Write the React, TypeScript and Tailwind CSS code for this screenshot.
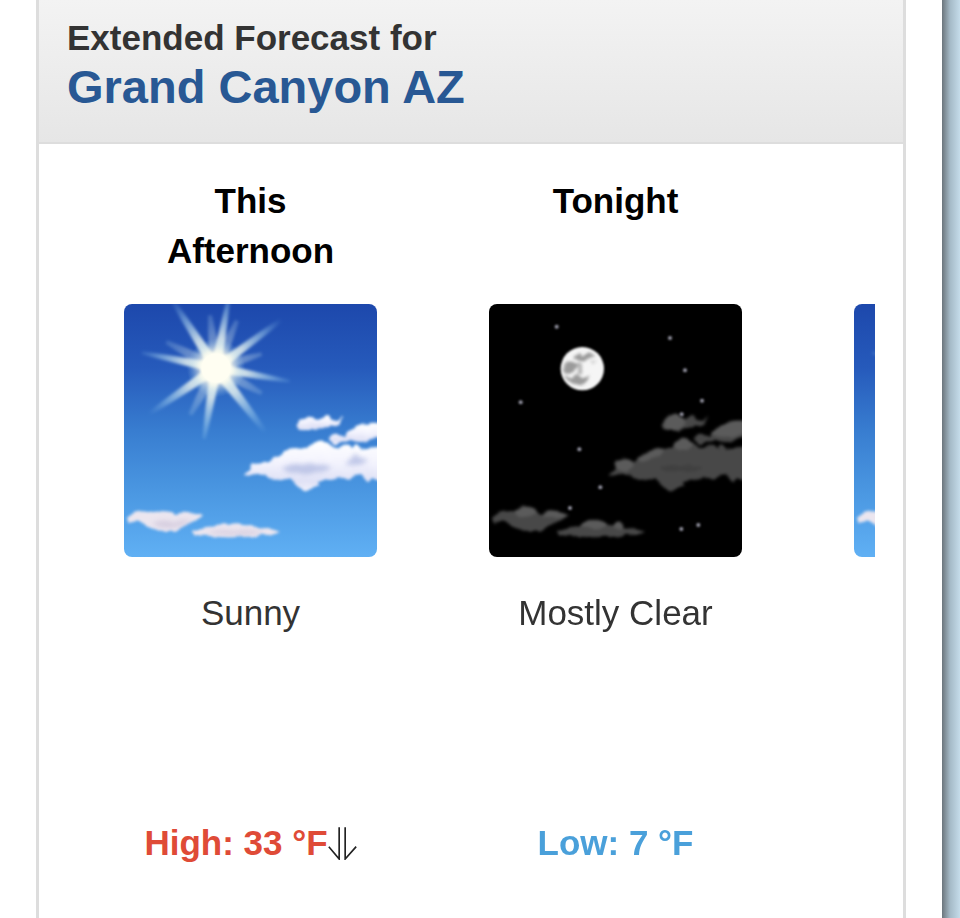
import type { ReactNode } from 'react'

type Period = {
  id: string
  name: string
  image: 'sunny' | 'clear-night'
  description?: string
  high?: string
  low?: string
}

const periods: Period[] = [
  { id: 'afternoon', name: 'This Afternoon', image: 'sunny', description: 'Sunny', high: 'High: 33 °F' },
  { id: 'tonight', name: 'Tonight', image: 'clear-night', description: 'Mostly Clear', low: 'Low: 7 °F' },
  { id: 'next', name: '', image: 'sunny' },
]

// center of the sun, then [tip x, tip y, half width at the core]
const SUN = { x: 303, y: 218 }
const rays = [
  [166, 6, 17],
  [342, 4, 16],
  [528, 52, 15],
  [524, 258, 15],
  [462, 424, 18],
  [267, 430, 17],
  [84, 368, 16],
  [80, 172, 15],
  [285, 60, 20],
  [366, 76, 20],
  [154, 140, 20],
  [440, 176, 18],
  [440, 294, 20],
  [226, 358, 20],
]

const stars = [
  [230, 94],
  [570, 128],
  [615, 225],
  [666, 316],
  [122, 321],
  [298, 462],
  [361, 576],
  [270, 638],
  [604, 701],
  [655, 689],
  [605, 357],
]

function rayPoints([tx, ty, w]: number[]) {
  const dx = tx - SUN.x
  const dy = ty - SUN.y
  const len = Math.hypot(dx, dy)
  const nx = (-dy / len) * w
  const ny = (dx / len) * w
  const mx = SUN.x + dx * 0.7
  const my = SUN.y + dy * 0.7
  return [
    [SUN.x + nx, SUN.y + ny],
    [mx + nx * 0.55, my + ny * 0.55],
    [tx + nx * 0.3, ty + ny * 0.3],
    [tx - nx * 0.3, ty - ny * 0.3],
    [mx - nx * 0.55, my - ny * 0.55],
    [SUN.x - nx, SUN.y - ny],
  ]
    .map((p) => p.join(','))
    .join(' ')
}

const cloudPaths = {
  wisp: 'M544 386 Q550 370 566 371 Q580 364 598 370 Q612 378 624 366 Q628 356 642 360 L648 372 Q664 382 684 364 Q676 392 660 393 Q642 386 626 398 Q608 406 590 400 Q568 410 550 398Z',
  upper:
    'M642 430 Q650 412 668 416 Q682 414 690 428 Q692 408 716 400 Q732 384 756 388 Q772 382 800 388 L800 428 Q770 428 752 438 Q728 444 708 434 Q692 446 676 440 Q662 452 650 442Z',
  main: 'M388 532 Q406 526 406 514 Q412 500 432 502 Q442 492 458 500 Q466 502 474 488 Q490 484 502 476 Q512 462 530 462 Q552 454 576 458 Q586 440 608 440 Q630 434 642 448 Q662 466 684 452 Q700 448 712 458 L722 446 L736 460 Q760 456 800 454 L800 552 Q786 560 774 548 L758 558 L742 540 Q720 538 704 550 Q676 544 650 554 Q624 550 606 558 L618 570 Q596 574 588 582 Q574 594 562 582 Q550 578 540 566 L526 552 Q500 560 482 550 Q462 552 452 540 Q438 532 424 536 Q406 548 388 536Z',
  left: 'M40 674 Q48 662 56 652 Q76 644 100 650 Q124 642 144 648 Q168 646 184 656 Q204 650 226 654 Q250 648 264 662 Q248 676 230 680 Q214 694 196 698 Q186 712 172 704 Q142 710 122 702 Q98 700 88 686 Q64 672 44 684Z',
  right:
    'M230 708 Q260 694 286 694 Q314 684 342 688 Q366 680 386 688 Q412 692 438 700 Q470 694 494 710 Q474 722 440 718 Q408 726 370 724 Q324 728 290 722 Q252 724 234 714Z',
}

function Tile({ label, children }: { label: string; children: ReactNode }) {
  return (
    <svg
      viewBox="27 26 759 759"
      role="img"
      aria-label={label}
      className="h-[253px] w-[253px] shrink-0 rounded-lg"
    >
      {children}
    </svg>
  )
}

function PuffFilter({ id, blur }: { id: string; blur: number }) {
  return (
    <filter id={id} x="-10%" y="-20%" width="120%" height="140%" colorInterpolationFilters="sRGB">
      <feTurbulence type="fractalNoise" baseFrequency="0.035" numOctaves="1" seed="4" />
      <feDisplacementMap in="SourceGraphic" scale="18" xChannelSelector="R" yChannelSelector="G" />
      <feGaussianBlur stdDeviation={blur} />
    </filter>
  )
}

function SunnyTile({ id }: { id: string }) {
  return (
    <Tile label="Sunny">
      <defs>
        <linearGradient id={`${id}-sky`} x1="0" y1="0" x2="0" y2="1">
          <stop offset="0" stopColor="#1d48ac" />
          <stop offset="0.25" stopColor="#265abb" />
          <stop offset="0.5" stopColor="#387dd0" />
          <stop offset="0.75" stopColor="#4b98e2" />
          <stop offset="1" stopColor="#60b0f4" />
        </linearGradient>
        <radialGradient id={`${id}-ray`} gradientUnits="userSpaceOnUse" cx={SUN.x} cy={SUN.y} r="245">
          <stop offset="0.15" stopColor="#fffff2" />
          <stop offset="0.4" stopColor="#dcebed" stopOpacity="0.85" />
          <stop offset="0.7" stopColor="#a6d2ee" stopOpacity="0.5" />
          <stop offset="1" stopColor="#7fbdeb" stopOpacity="0" />
        </radialGradient>
        <radialGradient id={`${id}-glow`}>
          <stop offset="0.48" stopColor="#fffef2" />
          <stop offset="0.6" stopColor="#f3f7ec" stopOpacity="0.6" />
          <stop offset="1" stopColor="#8fc4ea" stopOpacity="0" />
        </radialGradient>
        <linearGradient id={`${id}-cloud`} x1="0" y1="0" x2="0" y2="1">
          <stop offset="0" stopColor="#ffffff" />
          <stop offset="0.45" stopColor="#f2f2fd" />
          <stop offset="0.8" stopColor="#dfe1f5" />
          <stop offset="1" stopColor="#f2f1fb" />
        </linearGradient>
        <filter id={`${id}-soft`}>
          <feGaussianBlur stdDeviation="4" />
        </filter>
        <filter id={`${id}-shade`} x="-20%" y="-50%" width="140%" height="200%">
          <feGaussianBlur stdDeviation="8" />
        </filter>
        <PuffFilter id={`${id}-puff`} blur={4} />
      </defs>
      <rect x="27" y="26" width="759" height="759" fill={`url(#${id}-sky)`} />
      <g fill={`url(#${id}-ray)`} filter={`url(#${id}-soft)`}>
        {rays.slice(0, 8).map((ray, i) => (
          <polygon key={i} points={rayPoints(ray)} />
        ))}
        <g opacity="0.4">
          {rays.slice(8).map((ray, i) => (
            <polygon key={i} points={rayPoints(ray)} />
          ))}
        </g>
      </g>
      <circle cx={SUN.x} cy={SUN.y} r="88" fill={`url(#${id}-glow)`} />
      <g filter={`url(#${id}-puff)`}>
        <g fill={`url(#${id}-cloud)`}>
          <path d={cloudPaths.wisp} />
          <path d={cloudPaths.upper} />
          <path d={cloudPaths.main} />
        </g>
        <g fill="#ece6ef">
          <path d={cloudPaths.left} />
          <path d={cloudPaths.right} />
        </g>
      </g>
      <g fill="#b4bde3" opacity="0.8" filter={`url(#${id}-shade)`}>
        <path d="M500 520 Q530 500 564 508 Q590 498 604 510 Q628 504 650 516 Q634 532 602 530 Q576 544 548 532 Q520 536 500 520Z" />
        <path d="M690 506 Q712 490 720 472 Q728 490 760 492 L744 506 Q710 514 690 506Z" />
      </g>
      <g fill="#d0c8dc" opacity="0.8" filter={`url(#${id}-shade)`}>
        <path d="M110 684 Q146 668 176 682 Q206 670 228 674 Q200 696 168 698 Q130 700 110 684Z" />
        <path d="M272 712 Q320 700 356 708 Q410 700 446 712 Q380 724 272 712Z" />
      </g>
    </Tile>
  )
}

function ClearNightTile({ id }: { id: string }) {
  return (
    <Tile label="Mostly Clear">
      <defs>
        <filter id={`${id}-blur`} x="-50%" y="-50%" width="200%" height="200%">
          <feGaussianBlur stdDeviation="3" />
        </filter>
        <PuffFilter id={`${id}-puff`} blur={5} />
      </defs>
      <rect x="27" y="26" width="759" height="759" fill="#000000" />
      <g filter={`url(#${id}-blur)`}>
        <circle cx="307" cy="220" r="65" fill="#f5f5f5" />
      </g>
      <g filter={`url(#${id}-puff)`}>
        <g fill="#8a8a8a" opacity="0.85">
          <path d="M282 184 L296 176 L308 184 L326 174 L346 180 L328 190 L314 198 L292 196Z" />
          <path d="M254 206 Q264 190 278 198 L292 212 L280 230 Q264 242 250 228Z" />
          <path d="M254 240 L278 250 L290 236 L306 246 L328 238 L322 256 L306 270 L286 266 L268 262Z" />
          <path d="M290 200 L302 204 L304 234 L292 238Z" opacity="0.7" />
          <path d="M334 194 L348 198 L340 208Z" opacity="0.4" />
        </g>
        <g fill="#484848">
          <path d={cloudPaths.wisp} />
          <path d={cloudPaths.upper} />
          <path d={cloudPaths.main} />
          <path d={cloudPaths.left} />
          <path d={cloudPaths.right} />
        </g>
        <g fill="#5b5b5b">
          <ellipse cx="584" cy="382" rx="32" ry="24" />
          <path d="M696 422 Q702 394 732 390 Q752 374 800 380 L800 412 Q760 430 696 422Z" />
          <ellipse cx="608" cy="448" rx="28" ry="18" />
          <path d="M474 500 Q480 472 512 468 Q532 456 554 464 L540 482 Q510 486 496 500Z" />
          <ellipse cx="433" cy="508" rx="27" ry="20" />
          <ellipse cx="136" cy="650" rx="34" ry="17" />
          <path d="M186 660 Q198 644 222 648 Q250 640 260 664 Q222 674 186 660Z" />
          <ellipse cx="342" cy="688" rx="38" ry="14" />
          <ellipse cx="416" cy="692" rx="14" ry="11" />
        </g>
        <path
          d="M540 516 Q570 502 600 514 Q640 504 668 518 Q630 536 592 528 Q560 532 540 516Z"
          fill="#404040"
        />
      </g>
      <g fill="#9a9aa8" filter={`url(#${id}-blur)`}>
        {stars.map(([x, y]) => (
          <circle key={`${x}-${y}`} cx={x} cy={y} r="6" />
        ))}
      </g>
    </Tile>
  )
}

function FallingArrow() {
  return (
    <svg
      viewBox="590 46 86 99"
      role="img"
      aria-label="Temperature falling"
      className="h-[33px] w-[29px]"
      fill="none"
      stroke="#222222"
      strokeWidth="5"
    >
      <path d="M623 47V142L592 105" />
      <path d="M641 47V142L674 105" />
    </svg>
  )
}

function ForecastPeriod({ period }: { period: Period }) {
  return (
    <li className="flex w-[365px] shrink-0 flex-col items-center text-center text-[35px] leading-[50px]">
      <h3 className="mb-7 h-[100px] w-[200px] font-bold text-black">{period.name}</h3>
      {period.image === 'sunny' ? <SunnyTile id={period.id} /> : <ClearNightTile id={period.id} />}
      <p className="mt-[31px] h-[230px] text-[#333333]">{period.description}</p>
      {period.high && (
        <p className="flex items-center font-bold text-[#df4b37]">
          {period.high}
          <FallingArrow />
        </p>
      )}
      {period.low && <p className="font-bold text-[#4aa0da]">{period.low}</p>}
    </li>
  )
}

export default function App() {
  return (
    <div className="flex min-h-screen font-['Liberation_Sans',Arial,sans-serif]">
      <main className="flex min-w-0 grow flex-col bg-white px-9">
        <section className="flex grow flex-col border-x-[3px] border-[#dddddd]">
          <header className="border-b-2 border-[#dddddd] bg-linear-to-b from-[#f3f3f3] to-[#e6e6e6] px-7 pt-4 pb-7">
            <h2 className="font-bold">
              <span className="block text-[35px] leading-[44px] text-[#333333]">Extended Forecast for</span>
              <span className="block text-[47px] leading-[54px] text-[#285894]">Grand Canyon AZ</span>
            </h2>
          </header>
          <div className="pt-8 pr-7 pb-12 pl-[29px]">
            <ul className="flex overflow-hidden">
              {periods.map((period) => (
                <ForecastPeriod key={period.id} period={period} />
              ))}
            </ul>
          </div>
        </section>
      </main>
      {/* page edge shadow over the blue backdrop */}
      <div className="w-[18px] shrink-0 bg-linear-to-r from-[#6c767d] via-[#a5bac7] via-45% to-[#c5dcea]" />
    </div>
  )
}
